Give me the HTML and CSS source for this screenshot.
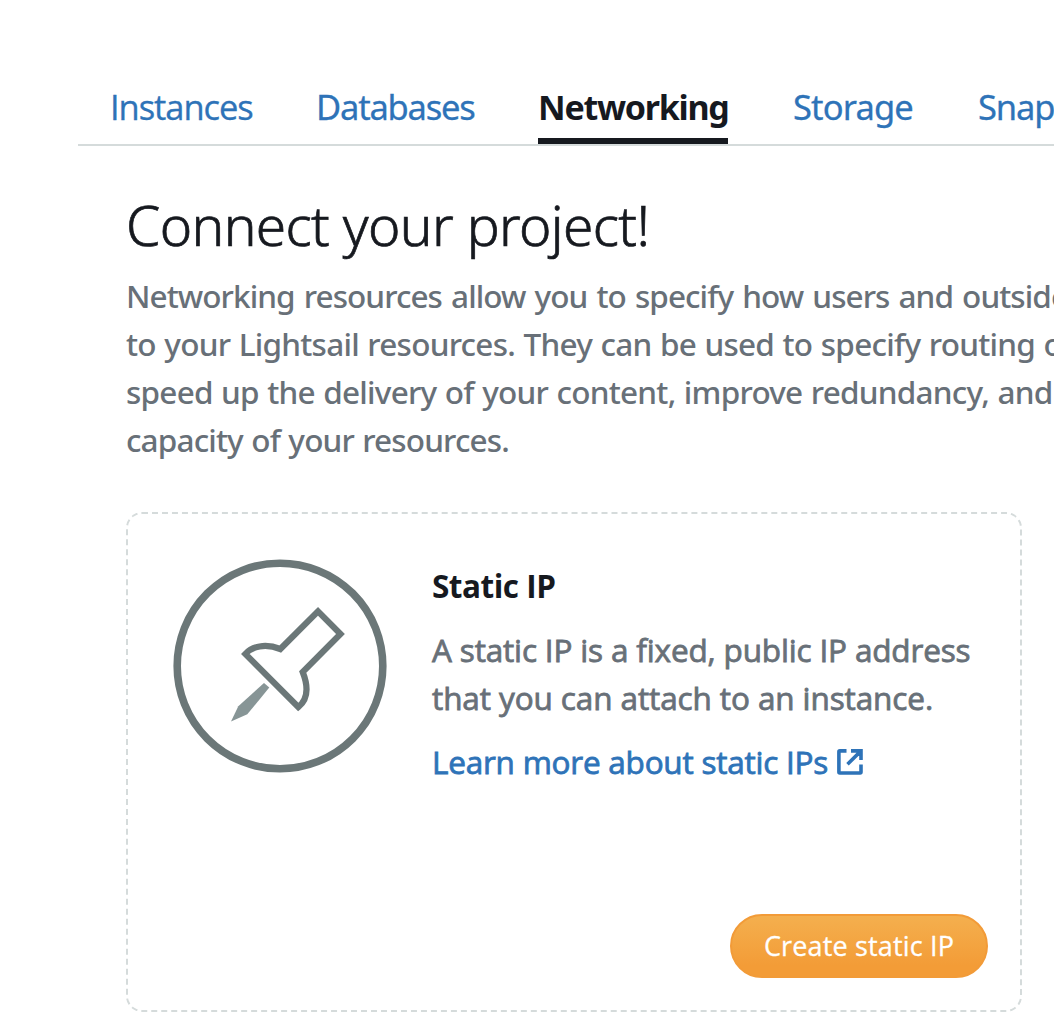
FILE: index.html
```html
<!DOCTYPE html>
<html lang="en">
<head>
<meta charset="utf-8">
<title>Networking</title>
<link rel="stylesheet" href="styles.css">
</head>
<body>
<div class="page">
  <nav class="tabs">
    <a class="tab tab-instances">Instances</a>
    <a class="tab tab-databases">Databases</a>
    <a class="tab tab-networking active">Networking</a>
    <a class="tab tab-storage">Storage</a>
    <a class="tab tab-snapshots">Snap</a>
  </nav>
  <main class="content">
    <h1 class="title">Connect your project!</h1>
    <p class="intro">
      <span class="line line-1">Networking resources allow you to specify how users and outside</span>
      <span class="line line-2">to your Lightsail resources. They can be used to specify routing o</span>
      <span class="line line-3">speed up the delivery of your content, improve redundancy, and</span>
      <span class="line line-4">capacity of your resources.</span>
    </p>
    <section class="card">
      <div class="card-body">
        <svg class="pin" viewBox="0 0 216 216" aria-hidden="true">
          <circle cx="108" cy="108" r="102.8" fill="none" stroke="#6b7778" stroke-width="7.6"/>
          <path d="M73.3 96C80 88.5 93 85 108.3 91L146 53.3L168.5 76L130.7 114C137 130 135 142 126.3 149Z" fill="none" stroke="#6b7778" stroke-width="6.2"/>
          <path d="M92 125L97.3 129.5L75.3 156.3L59 163.5L66.3 148.3Z" fill="#879596"/>
        </svg>
        <div class="card-text">
          <h2 class="card-title">Static IP</h2>
          <p class="card-copy">
            <span class="line copy-1">A static IP is a fixed, public IP address</span>
            <span class="line copy-2">that you can attach to an instance.</span>
          </p>
          <a class="learn">
            <span class="learn-label">Learn more about static IPs</span>
            <svg class="external" viewBox="0 0 26 26" aria-hidden="true">
              <path d="M9.5 1.9H2.8Q1.9 1.9 1.9 2.8V23.1Q1.9 24 2.8 24H23.1Q24 24 24 23.1V15.5M14 1.9H24V11M23.5 2.4L10.5 15.2" fill="none" stroke="#2e73b8" stroke-width="3.6"/>
            </svg>
          </a>
        </div>
      </div>
      <button class="create">Create static IP</button>
    </section>
  </main>
</div>
</body>
</html>
```
FILE: styles.css
```css
* { box-sizing: border-box; }
body {
  margin: 0;
  background: #fff;
  color: #16191f;
  font-family: "Noto Sans", "Open Sans", sans-serif;
  overflow: hidden;
}
.page { height: 1028px; padding: 83px 0 0 78px; overflow: hidden; }
h1, h2, p { margin: 0; }

.tabs {
  display: flex;
  gap: 64px;
  height: 63px;
  padding-left: 32px;
  border-bottom: 2px solid #d5dbdb;
}
.tab {
  flex: none;
  height: 61px;
  font-size: 34.5px;
  line-height: 48px;
  color: #2e73b8;
  white-space: nowrap;
  -webkit-text-stroke: 0.3px #2e73b8;
}
.tab-instances { width: 142px; font-family: "Open Sans", sans-serif; letter-spacing: -1.05px; }
.tab-databases { width: 158px; letter-spacing: -1.2px; }
.tab-networking { width: 190px; letter-spacing: -1.25px; }
.tab-storage { width: 122px; padding-left: 1px; letter-spacing: -0.85px; }
.tab-snapshots { letter-spacing: -1.1px; }
.tab.active {
  font-size: 34px;
  font-weight: 700;
  color: #16191f;
  border-bottom: 6px solid #16191f;
  -webkit-text-stroke: 0;
}

.content { padding: 43px 0 0 48px; }
.title {
  font-size: 55px;
  line-height: 72px;
  font-weight: 300;
  letter-spacing: -0.62px;
  -webkit-text-stroke: 0.7px #16191f;
}
.intro {
  margin-top: 11px;
  font-size: 31.5px;
  line-height: 48px;
  font-weight: 500;
  color: #687078;
}
.line { display: block; white-space: nowrap; }
.line-1 { letter-spacing: -0.93px; word-spacing: 1.8px; }
.line-2 { letter-spacing: -0.75px; word-spacing: 1px; }
.line-3 { letter-spacing: -0.75px; word-spacing: 0.9px; }
.line-4 { letter-spacing: -0.85px; word-spacing: 1px; }

.card {
  display: flex;
  flex-direction: column;
  justify-content: space-between;
  width: 896px;
  height: 500px;
  margin-top: 48px;
  padding: 44px 32px 32px 44px;
  border: 2px dashed #d5dbdb;
  border-radius: 16px;
  font-family: "Open Sans", "Noto Sans", sans-serif;
  font-size: 31.5px;
  line-height: 48px;
}
.card-body { display: flex; gap: 44px; }
.pin { flex: none; width: 216px; height: 216px; }
.card-text { display: flex; flex-direction: column; gap: 16px; padding-top: 4px; }
.card-title { font-size: 31.5px; line-height: 48px; font-weight: 700; letter-spacing: -0.5px; }
.card-copy { color: #687078; -webkit-text-stroke: 0.8px #687078; }
.copy-1 { letter-spacing: -0.16px; }
.copy-2 { letter-spacing: -0.1px; }
.learn { display: flex; align-items: center; color: #2e73b8; }
.learn-label {
  width: 405px;
  white-space: nowrap;
  letter-spacing: -0.23px;
  -webkit-text-stroke: 0.8px #2e73b8;
}
.external { width: 26px; height: 26px; }

.create {
  align-self: flex-end;
  width: 258px;
  height: 64px;
  padding: 0;
  border: 2px solid #f29b38;
  border-radius: 32px;
  background: linear-gradient(#f4b04f, #f39c37 80%);
  background-origin: border-box;
  color: #fff;
  font-family: "Open Sans", sans-serif;
  font-size: 27px;
  line-height: 60px;
  letter-spacing: 0.15px;
  -webkit-text-stroke: 0.3px #fff;
}
```
